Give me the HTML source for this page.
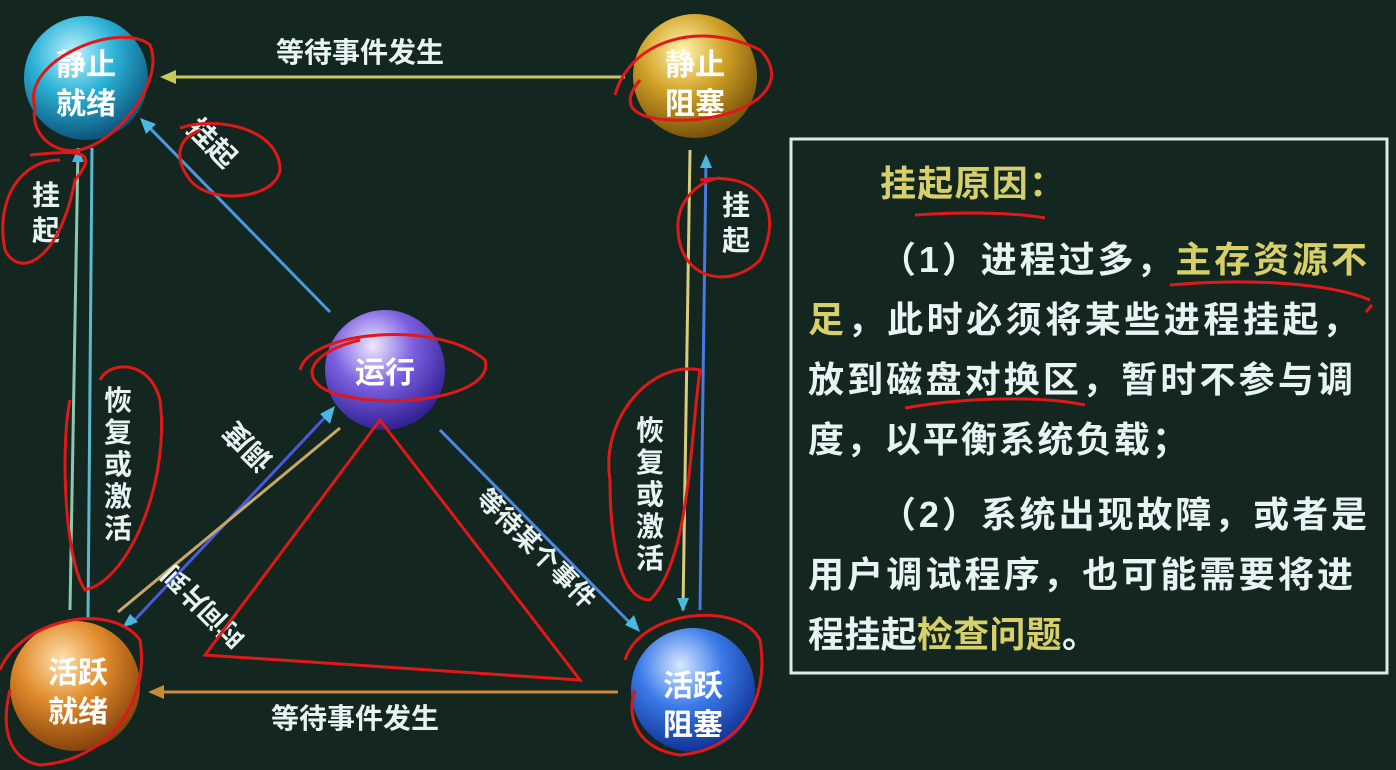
<!DOCTYPE html>
<html><head><meta charset="utf-8"><style>
html,body{margin:0;padding:0;background:#13261f;}
svg{display:block}
text{font-family:"Liberation Sans","Noto Sans CJK SC",sans-serif;font-weight:bold;}
</style></head><body>
<svg width="1396" height="770" viewBox="0 0 1396 770" xmlns="http://www.w3.org/2000/svg">
<defs>
<radialGradient id="gb" cx="0.4" cy="0.3" r="0.75"><stop offset="0" stop-color="#bff3ff"/><stop offset="0.45" stop-color="#2ab2d6"/><stop offset="1" stop-color="#0a4a72"/></radialGradient>
<radialGradient id="gy" cx="0.4" cy="0.3" r="0.75"><stop offset="0" stop-color="#fff6b0"/><stop offset="0.45" stop-color="#d2a227"/><stop offset="1" stop-color="#6e4a08"/></radialGradient>
<radialGradient id="gp" cx="0.4" cy="0.3" r="0.75"><stop offset="0" stop-color="#f0e8ff"/><stop offset="0.45" stop-color="#7b5fe0"/><stop offset="1" stop-color="#2a1a8a"/></radialGradient>
<radialGradient id="go" cx="0.4" cy="0.3" r="0.75"><stop offset="0" stop-color="#ffe2b0"/><stop offset="0.45" stop-color="#e08a2a"/><stop offset="1" stop-color="#7a3a08"/></radialGradient>
<radialGradient id="gbl" cx="0.4" cy="0.3" r="0.75"><stop offset="0" stop-color="#d8e8ff"/><stop offset="0.45" stop-color="#3a7ae8"/><stop offset="1" stop-color="#0c2a8a"/></radialGradient>
</defs>
<rect width="1396" height="770" fill="#13261f"/>
<g stroke-width="3" fill="none">
<line x1="625" y1="77" x2="170" y2="77" stroke="#c9c85a"/>
<line x1="618" y1="692" x2="155" y2="692" stroke="#c98a3a"/>
<line x1="330" y1="312" x2="142" y2="120" stroke="#4a9ae0"/>
<line x1="78" y1="148" x2="70" y2="610" stroke="#8cc8b0"/>
<line x1="92" y1="148" x2="88" y2="620" stroke="#5ab8d0"/>
<line x1="690" y1="150" x2="683" y2="610" stroke="#d8cc80"/>
<line x1="706" y1="160" x2="700" y2="610" stroke="#4a7ae0"/>
<line x1="330" y1="412" x2="130" y2="625" stroke="#4a5ae0"/>
<line x1="340" y1="428" x2="118" y2="612" stroke="#c8a86a"/>
<line x1="440" y1="430" x2="635" y2="628" stroke="#4a8ae0"/>
</g>
<g fill="#c9c85a"><polygon points="160,77 176,70 176,84"/></g>
<g fill="#c98a3a"><polygon points="148,692 164,685 164,699"/></g>
<g fill="#4ab8e0"><polygon points="140,118 156,124 146,134"/><polygon points="78,148 72,162 84,162"/><polygon points="706,154 700,168 712,168"/><polygon points="335,406 320,414 330,424"/><polygon points="640,632 625,625 634,615"/><polygon points="122,628 130,614 138,622"/><polygon points="683,612 677,598 689,598"/></g>
<circle cx="86" cy="78" r="62" fill="url(#gb)"/>
<circle cx="695" cy="76" r="62" fill="url(#gy)"/>
<circle cx="385" cy="370" r="60" fill="url(#gp)"/>
<circle cx="75" cy="686" r="65" fill="url(#go)"/>
<circle cx="693" cy="690" r="62" fill="url(#gbl)"/>
<g fill="#fff" font-size="30" text-anchor="middle">
<text x="86" y="75">静止</text><text x="86" y="114">就绪</text>
<text x="695" y="75">静止</text><text x="695" y="114">阻塞</text>
<text x="385" y="383">运行</text>
<text x="78" y="683">活跃</text><text x="78" y="722">就绪</text>
<text x="693" y="696">活跃</text><text x="693" y="735">阻塞</text>
</g>
<g fill="#e8f4f4" font-size="28" text-anchor="middle">
<text x="360" y="62">等待事件发生</text>
<text x="355" y="728">等待事件发生</text>
<text x="46" y="205">挂</text><text x="46" y="240">起</text>
<text x="736" y="215">挂</text><text x="736" y="250">起</text>
<text x="118" y="410">恢</text><text x="118" y="442">复</text><text x="118" y="474">或</text><text x="118" y="506">激</text><text x="118" y="538">活</text>
<text x="650" y="440">恢</text><text x="650" y="472">复</text><text x="650" y="504">或</text><text x="650" y="536">激</text><text x="650" y="568">活</text>
<text transform="translate(205,150) rotate(45)">挂起</text>
<text transform="translate(255,440) rotate(-135)">调度</text>
<text transform="translate(210,600) rotate(-135)" font-size="26">时间片到</text>
<text transform="translate(530,555) rotate(45)" font-size="26">等待某个事件</text>
</g>
<rect x="791" y="139" width="596" height="534" fill="#13261f" stroke="#d8ece8" stroke-width="3"/>
<g font-size="36" fill="#e8f4f4" lengthAdjust="spacing">
<text x="880" y="196" fill="#d6cf6a" textLength="185" lengthAdjust="spacing">挂起原因：</text>
<text x="880" y="272" textLength="487" lengthAdjust="spacing">（1）进程过多，<tspan fill="#d6cf6a">主存资源不</tspan></text>
<text x="808" y="332" textLength="550" lengthAdjust="spacing"><tspan fill="#d6cf6a">足</tspan>，此时必须将某些进程挂起，</text>
<text x="808" y="392" textLength="545" lengthAdjust="spacing">放到磁盘对换区，暂时不参与调</text>
<text x="808" y="452" textLength="380" lengthAdjust="spacing">度，以平衡系统负载；</text>
<text x="880" y="527" textLength="487" lengthAdjust="spacing">（2）系统出现故障，或者是</text>
<text x="808" y="587" textLength="545" lengthAdjust="spacing">用户调试程序，也可能需要将进</text>
<text x="808" y="647" textLength="290" lengthAdjust="spacing">程挂起<tspan fill="#d6cf6a">检查问题</tspan>。</text>
</g>
<g stroke="#e01818" stroke-width="3" fill="none">
<path d="M35,108 C20,60 120,20 150,45 C165,80 120,140 80,150 C50,155 30,130 35,108"/>
<path d="M30,155 C80,150 100,150 75,180 C60,260 20,280 5,250 C-5,200 20,160 60,160"/>
<path d="M180,128 C220,115 280,130 280,170 C275,200 210,205 190,180 C175,160 175,140 200,130"/>
<path d="M615,95 C630,40 700,20 760,50 C790,80 760,115 690,120 C640,122 615,110 640,80"/>
<path d="M700,180 C760,170 785,210 760,260 C730,290 680,280 678,230 C676,200 700,180 720,178"/>
<path d="M300,370 C310,330 440,320 485,360 C495,395 400,410 340,395 C300,385 300,355 360,340"/>
<path d="M380,420 L205,655 L580,680 Z"/>
<path d="M70,400 C60,450 65,560 85,590 C130,580 170,480 160,400 C150,360 110,360 100,380"/>
<path d="M610,480 C600,420 650,360 700,370 C690,440 690,560 650,600 C620,600 610,540 610,480"/>
<path d="M0,670 C20,620 110,600 140,640 C150,700 110,760 40,765 C10,760 0,730 10,690"/>
<path d="M625,660 C640,610 740,600 760,640 C770,700 740,750 680,755 C640,750 625,720 635,690"/>
<path d="M915,215 C960,212 1010,212 1045,218"/>
<path d="M1170,285 C1250,278 1330,283 1370,300 M1366,312 L1372,305"/>
<path d="M905,408 C960,398 1040,395 1085,405"/>
</g>
</svg>
</body></html>
